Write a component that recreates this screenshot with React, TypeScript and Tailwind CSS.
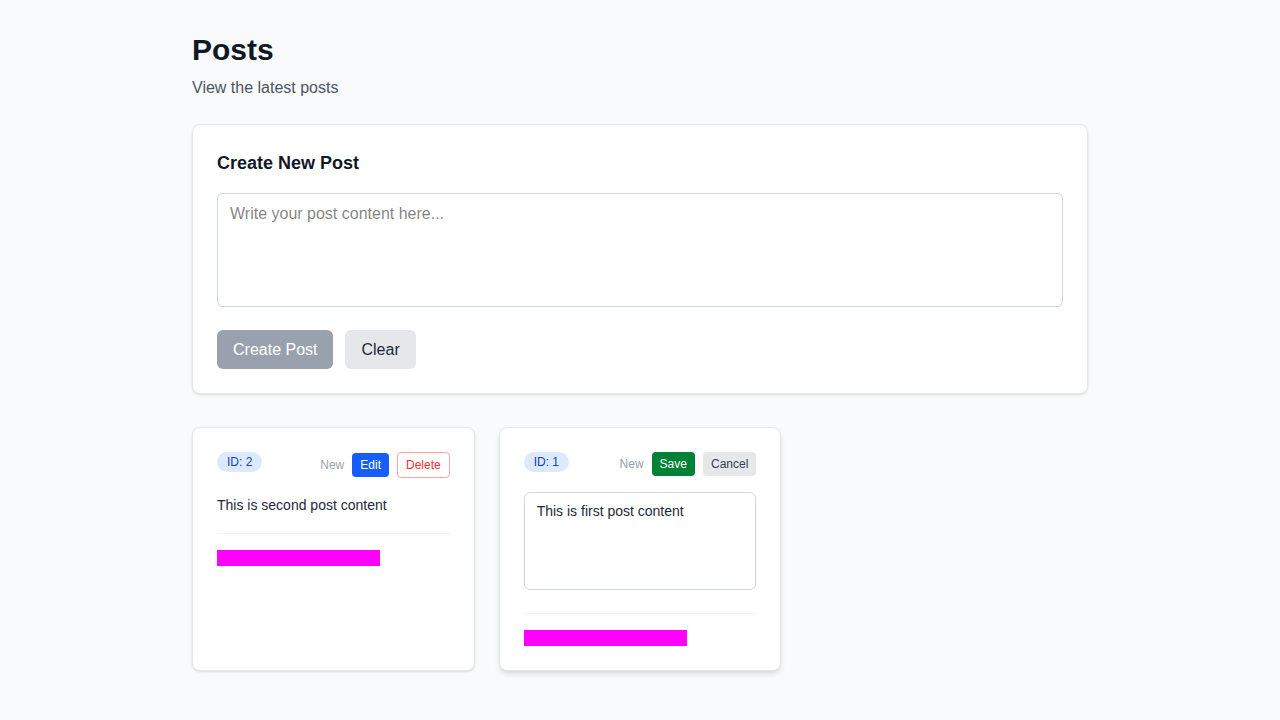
import React, { useState } from 'react';

type Post = { id: number; content: string; editing: boolean };

const initialPosts: Post[] = [
  { id: 2, content: 'This is second post content', editing: false },
  { id: 1, content: 'This is first post content', editing: true },
];

/* ---------------------------------------------------
   POST CARD
----------------------------------------------------*/
const PostCard: React.FC<{ post: Post }> = ({ post }) => {
  const [draft, setDraft] = useState(post.content);

  return (
    <div
      className={`bg-white border border-gray-200 rounded-lg p-6 ${
        post.editing ? 'shadow-md' : 'shadow-sm'
      }`}
    >
      {/* Header */}
      <div className={`flex items-start justify-between ${post.editing ? 'mb-4' : 'mb-[15px]'}`}>
        <span className="bg-blue-100 text-blue-800 text-xs px-2.5 py-0.5 rounded-full">
          ID: {post.id}
        </span>
        <div className="flex items-center gap-2">
          <span className="text-xs text-gray-400">New</span>
          {post.editing ? (
            <>
              <button className="bg-green-700 text-white text-xs px-2 py-1 rounded">Save</button>
              <button className="bg-gray-200 text-gray-700 text-xs px-2 py-1 rounded">Cancel</button>
            </>
          ) : (
            <>
              <button className="bg-blue-600 text-white text-xs px-2 py-1 rounded">Edit</button>
              <button className="bg-white border border-red-300 text-red-500 text-xs px-2 py-1 rounded">
                Delete
              </button>
            </>
          )}
        </div>
      </div>

      {/* Body */}
      {post.editing ? (
        <div>
          <textarea
            value={draft}
            onChange={(e) => setDraft(e.target.value)}
            rows={4}
            className="w-full border border-gray-300 rounded-md px-3 py-2 text-sm text-gray-800 resize-none outline-none"
          />
        </div>
      ) : (
        <p className="text-sm text-gray-800 leading-[24px]">{post.content}</p>
      )}

      {/* Footer */}
      <div className="mt-4 pt-4 border-t border-gray-100">
        <div className="h-4 w-[163px] bg-[#ff00ff]" />
      </div>
    </div>
  );
};

/* ---------------------------------------------------
   MAIN
----------------------------------------------------*/
export default function App() {
  const [content, setContent] = useState('');

  return (
    <div className="min-h-screen bg-gray-50 font-['Liberation_Sans',Arial,sans-serif]">
      <div className="max-w-4xl mx-auto py-8">
        <h1 className="text-3xl font-bold text-gray-900">Posts</h1>
        <p className="mt-2 text-gray-600">View the latest posts</p>

        {/* Create form */}
        <div className="mt-6 bg-white border border-gray-200 rounded-lg shadow-sm p-6">
          <h2 className="text-lg font-semibold text-gray-900 mb-4">Create New Post</h2>
          <textarea
            value={content}
            onChange={(e) => setContent(e.target.value)}
            rows={4}
            placeholder="Write your post content here..."
            className="block w-full border border-gray-300 rounded-md px-3 py-2 text-base resize-none outline-none"
          />
          <div className="mt-[23px] flex gap-3">
            <button className="bg-gray-400 text-white px-4 h-[39px] rounded-md">Create Post</button>
            <button
              onClick={() => setContent('')}
              className="bg-gray-200 text-gray-800 px-4 h-[39px] rounded-md"
            >
              Clear
            </button>
          </div>
        </div>

        {/* Posts */}
        <div className="mt-[33px] grid grid-cols-3 gap-6">
          {initialPosts.map((p) => (
            <PostCard key={p.id} post={p} />
          ))}
        </div>
      </div>
    </div>
  );
}
